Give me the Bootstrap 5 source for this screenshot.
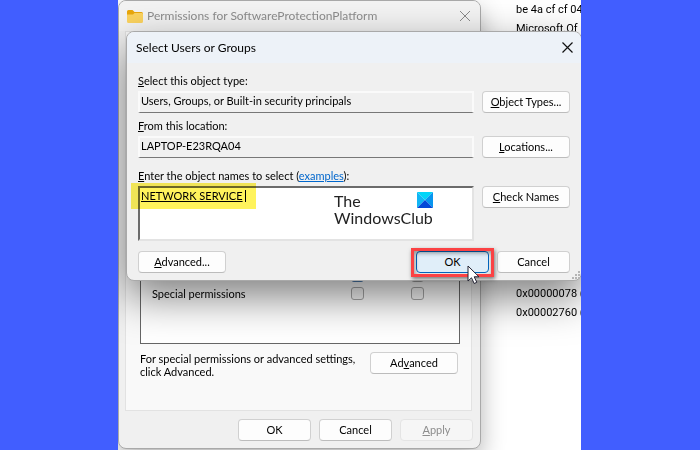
<!DOCTYPE html>
<html lang="en">
<head>
<meta charset="utf-8">
<meta name="viewport" content="width=device-width, initial-scale=1">
<title>Select Users or Groups</title>
<link href="https://cdn.jsdelivr.net/npm/bootstrap@5.3.0/dist/css/bootstrap.min.css" rel="stylesheet">
<style>
body{background:#415eff;color:#000;font:11px/13px Lato,"Liberation Sans",sans-serif;padding:0 119px 0 118px}
.desk{min-height:max(100vh,450px);background:#fff}
.back-text{left:398px;top:0;font:11px/19px Roboto,"Liberation Sans",sans-serif}
.back-text .later{margin-top:246px}
.win{border:1px solid #a9a9a9;border-radius:8px;background:#f0f0f0}
.win-perm{top:0;bottom:1px;left:0;width:363px;box-shadow:0 10px 24px rgba(0,0,0,.3)}
.win-title{font:12px/16px Lato,"Open Sans",sans-serif}
.win-perm .win-title{height:30px;color:#8d8d8d;padding:0 10px 0 8px;background:#f3f3f3;border-radius:7px 7px 0 0}
.pane{background:#f9f9f9;border:1px solid #e2e2e2;margin:0 8px 0 6px;padding:0 11px 32px 14px}
.perm-list{background:#fff;border:1px solid #666;padding:0 35px 41px 11px}
.perm-row{height:18px}
.perm-row .checks{gap:47px}
.perm-row .form-check-input{width:13px;height:13px;margin:0;border:1px solid #a8a8a8;border-radius:3px;background-color:#fafafa;opacity:1}
.perm-row .form-check-input.picked{border-color:#4d7caf;background-color:#4d7caf}
.more{padding:8px 2px 0 0}
.win-perm footer{padding:8px 7px 7px}
.dlg-btn{height:22px;padding:0 2px;font-size:11px;line-height:18px;color:#000;background:#fdfdfd;border:1px solid #d0d0d0;border-bottom-color:#bcbcbc;border-radius:4px}
.dlg-btn:disabled{color:#8d8d8d;background:#f6f6f6;border-color:#e4e4e4;opacity:1}
.w-narrow{width:73px}
.w-wide{width:88px}
.win-pick{left:8px;right:-1px;top:31px;box-shadow:0 16px 42px rgba(0,0,0,.5)}
.win-pick .win-title{height:31px;padding:0 8px 0 9px;background:#edf2f8;border-radius:7px 7px 0 0}
.pick-body{padding:11px 11px 7px}
.pick-grid{display:grid;grid-template-columns:1fr 88px;column-gap:8px;align-items:start}
.pick-grid label{line-height:14px;grid-column:1/-1;margin-bottom:3px}
.gap-a{margin-top:6px}
.gap-b{margin-top:11px}
.sunk{width:100%;font:inherit;color:#000;background:#f0f0f0;border:2px solid #fafafa;border-bottom:1px solid #777;border-radius:0;padding:0 1px 5px;height:22px;outline:0}
.names{height:55px;display:block;resize:none;background:#fff;border:2px solid #e3e3e3;border-top-color:#6b6b6b;border-left-color:#6b6b6b;padding:1px;text-decoration:underline;overflow:hidden}
.hilite{left:-7px;top:-3px;width:125px;height:26px;background:#fff35c;mix-blend-mode:multiply}
.caret-bar{left:107px;top:4px;width:1px;height:12px;background:#000}
.watermark{left:196px;top:6px;width:99px;font:16px/17px Lato,sans-serif;color:#222}
.callout{inset:-3px -5px -4px;border:3px solid #fb4244;box-shadow:1px 2px 4px rgba(0,0,0,.5),inset 1px 2px 4px rgba(0,0,0,.4)}
.dlg-btn.default{background:#e0eef9;border:1px solid #0067c0}
.bottom-row{margin-top:10px}
.pointer{left:51px;top:14px}
.grip{right:1px;bottom:1px}
a{color:#0066cc}
</style>
<script src="https://cdn.jsdelivr.net/npm/bootstrap@5.3.0/dist/js/bootstrap.bundle.min.js"></script>
</head>
<body>
<main class="desk position-relative overflow-hidden">
  <div class="back-text position-absolute text-nowrap">
    <div>be 4a cf cf 04</div>
    <div>Microsoft.Of</div>
    <div class="later">0x00000078 (</div>
    <div>0x00002760 (</div>
  </div>

  <section class="win win-perm position-absolute d-flex flex-column">
    <header class="win-title d-flex align-items-center">
      <svg width="16" height="13" viewBox="0 0 16 13"><path d="M0 1.5Q0 0 1.500 0H5.500L7.500 2H14.500Q16 2 16 3.500V11H0Z" fill="#e9a70c"/><path d="M0 4.500H6L7.500 3H14.800Q16 3 16 4.200V11.500Q16 13 14.500 13H1.500Q0 13 0 11.500Z" fill="#fbd35f"/></svg>
      <span class="ms-1 me-auto">Permissions for SoftwareProtectionPlatform</span>
      <svg width="10" height="10" viewBox="0 0 10 10" stroke="#8a8a8a" stroke-width="1"><path d="M0 0L10 10M10 0L0 10"/></svg>
    </header>
    <div class="pane d-flex flex-column flex-grow-1">
      <div class="perm-list d-flex flex-column justify-content-end flex-grow-1">
        <div class="perm-row d-flex justify-content-end align-items-center">
          <span class="checks d-flex"><input class="form-check-input picked" type="checkbox" aria-label="Allow read"><input class="form-check-input" type="checkbox" aria-label="Deny read"></span>
        </div>
        <div class="perm-row d-flex justify-content-between align-items-center">
          <span>Special permissions</span>
          <span class="checks d-flex"><input class="form-check-input" type="checkbox" disabled aria-label="Allow special permissions"><input class="form-check-input" type="checkbox" disabled aria-label="Deny special permissions"></span>
        </div>
      </div>
      <div class="more d-flex justify-content-between align-items-start">
        <span>For special permissions or advanced settings,<br>click Advanced.</span>
        <button class="btn dlg-btn w-wide" type="button">Ad<u>v</u>anced</button>
      </div>
    </div>
    <footer class="d-flex justify-content-end gap-2">
      <button class="btn dlg-btn w-narrow" type="button">OK</button>
      <button class="btn dlg-btn w-narrow" type="button">Cancel</button>
      <button class="btn dlg-btn w-narrow" type="button" disabled><u>A</u>pply</button>
    </footer>
  </section>

  <section class="win win-pick position-absolute">
    <header class="win-title d-flex align-items-center justify-content-between">
      <span>Select Users or Groups</span>
      <svg width="11" height="11" viewBox="0 0 11 11" stroke="#111" stroke-width="1.200"><path d="M.5.5L10.500 10.500M10.500.5L.5 10.500"/></svg>
    </header>
    <form class="pick-body">
      <div class="pick-grid">
        <label for="kind"><u>S</u>elect this object type:</label>
        <input id="kind" class="sunk" readonly value="Users, Groups, or Built-in security principals">
        <button class="btn dlg-btn" type="button"><u>O</u>bject Types...</button>
        <label for="place" class="gap-a"><u>F</u>rom this location:</label>
        <input id="place" class="sunk" readonly value="LAPTOP-E23RQA04">
        <button class="btn dlg-btn" type="button"><u>L</u>ocations...</button>
        <label for="names" class="gap-b"><u>E</u>nter the object names to select (<a href="#">examples</a>):</label>
        <div class="position-relative">
          <textarea id="names" class="sunk names" spellcheck="false">NETWORK SERVICE</textarea>
          <span class="caret-bar position-absolute"></span>
          <span class="hilite position-absolute pe-none"></span>
          <div class="watermark position-absolute pe-none">
            <div class="d-flex justify-content-between align-items-end"><span>The</span><svg class="align-self-start" width="16" height="16" viewBox="0 0 16 16"><path d="M0 0H16L8 8Z" fill="#00d5f8"/><path d="M0 0L8 8L0 16Z" fill="#10b5f4"/><path d="M16 0V16L8 8Z" fill="#0795ef"/><path d="M0 16L8 8L16 16Z" fill="#0448d8"/></svg></div>
            <div>WindowsClub</div>
          </div>
        </div>
        <button class="btn dlg-btn" type="button"><u>C</u>heck Names</button>
      </div>
      <div class="bottom-row d-flex gap-2">
        <button class="btn dlg-btn w-wide me-auto" type="button"><u>A</u>dvanced...</button>
        <div class="position-relative">
          <button class="btn dlg-btn default w-narrow d-block" type="button">OK</button>
          <span class="callout position-absolute pe-none"></span>
          <svg class="pointer position-absolute pe-none" width="13" height="20" viewBox="0 0 13 20"><path d="M1 1V16L4.500 12.800L7.200 18.500L9.800 17.300L7.200 11.800H12Z" fill="#fff" stroke="#223" stroke-width="1"/></svg>
        </div>
        <button class="btn dlg-btn w-narrow" type="button">Cancel</button>
      </div>
      <svg class="grip position-absolute" width="8" height="8" fill="#b5b5b5"><path d="M6 0h2v2h-2zM3 3h2v2h-2zM6 3h2v2h-2zM0 6h2v2h-2zM3 6h2v2h-2zM6 6h2v2h-2z"/></svg>
    </form>
  </section>
</main>
</body>
</html>
